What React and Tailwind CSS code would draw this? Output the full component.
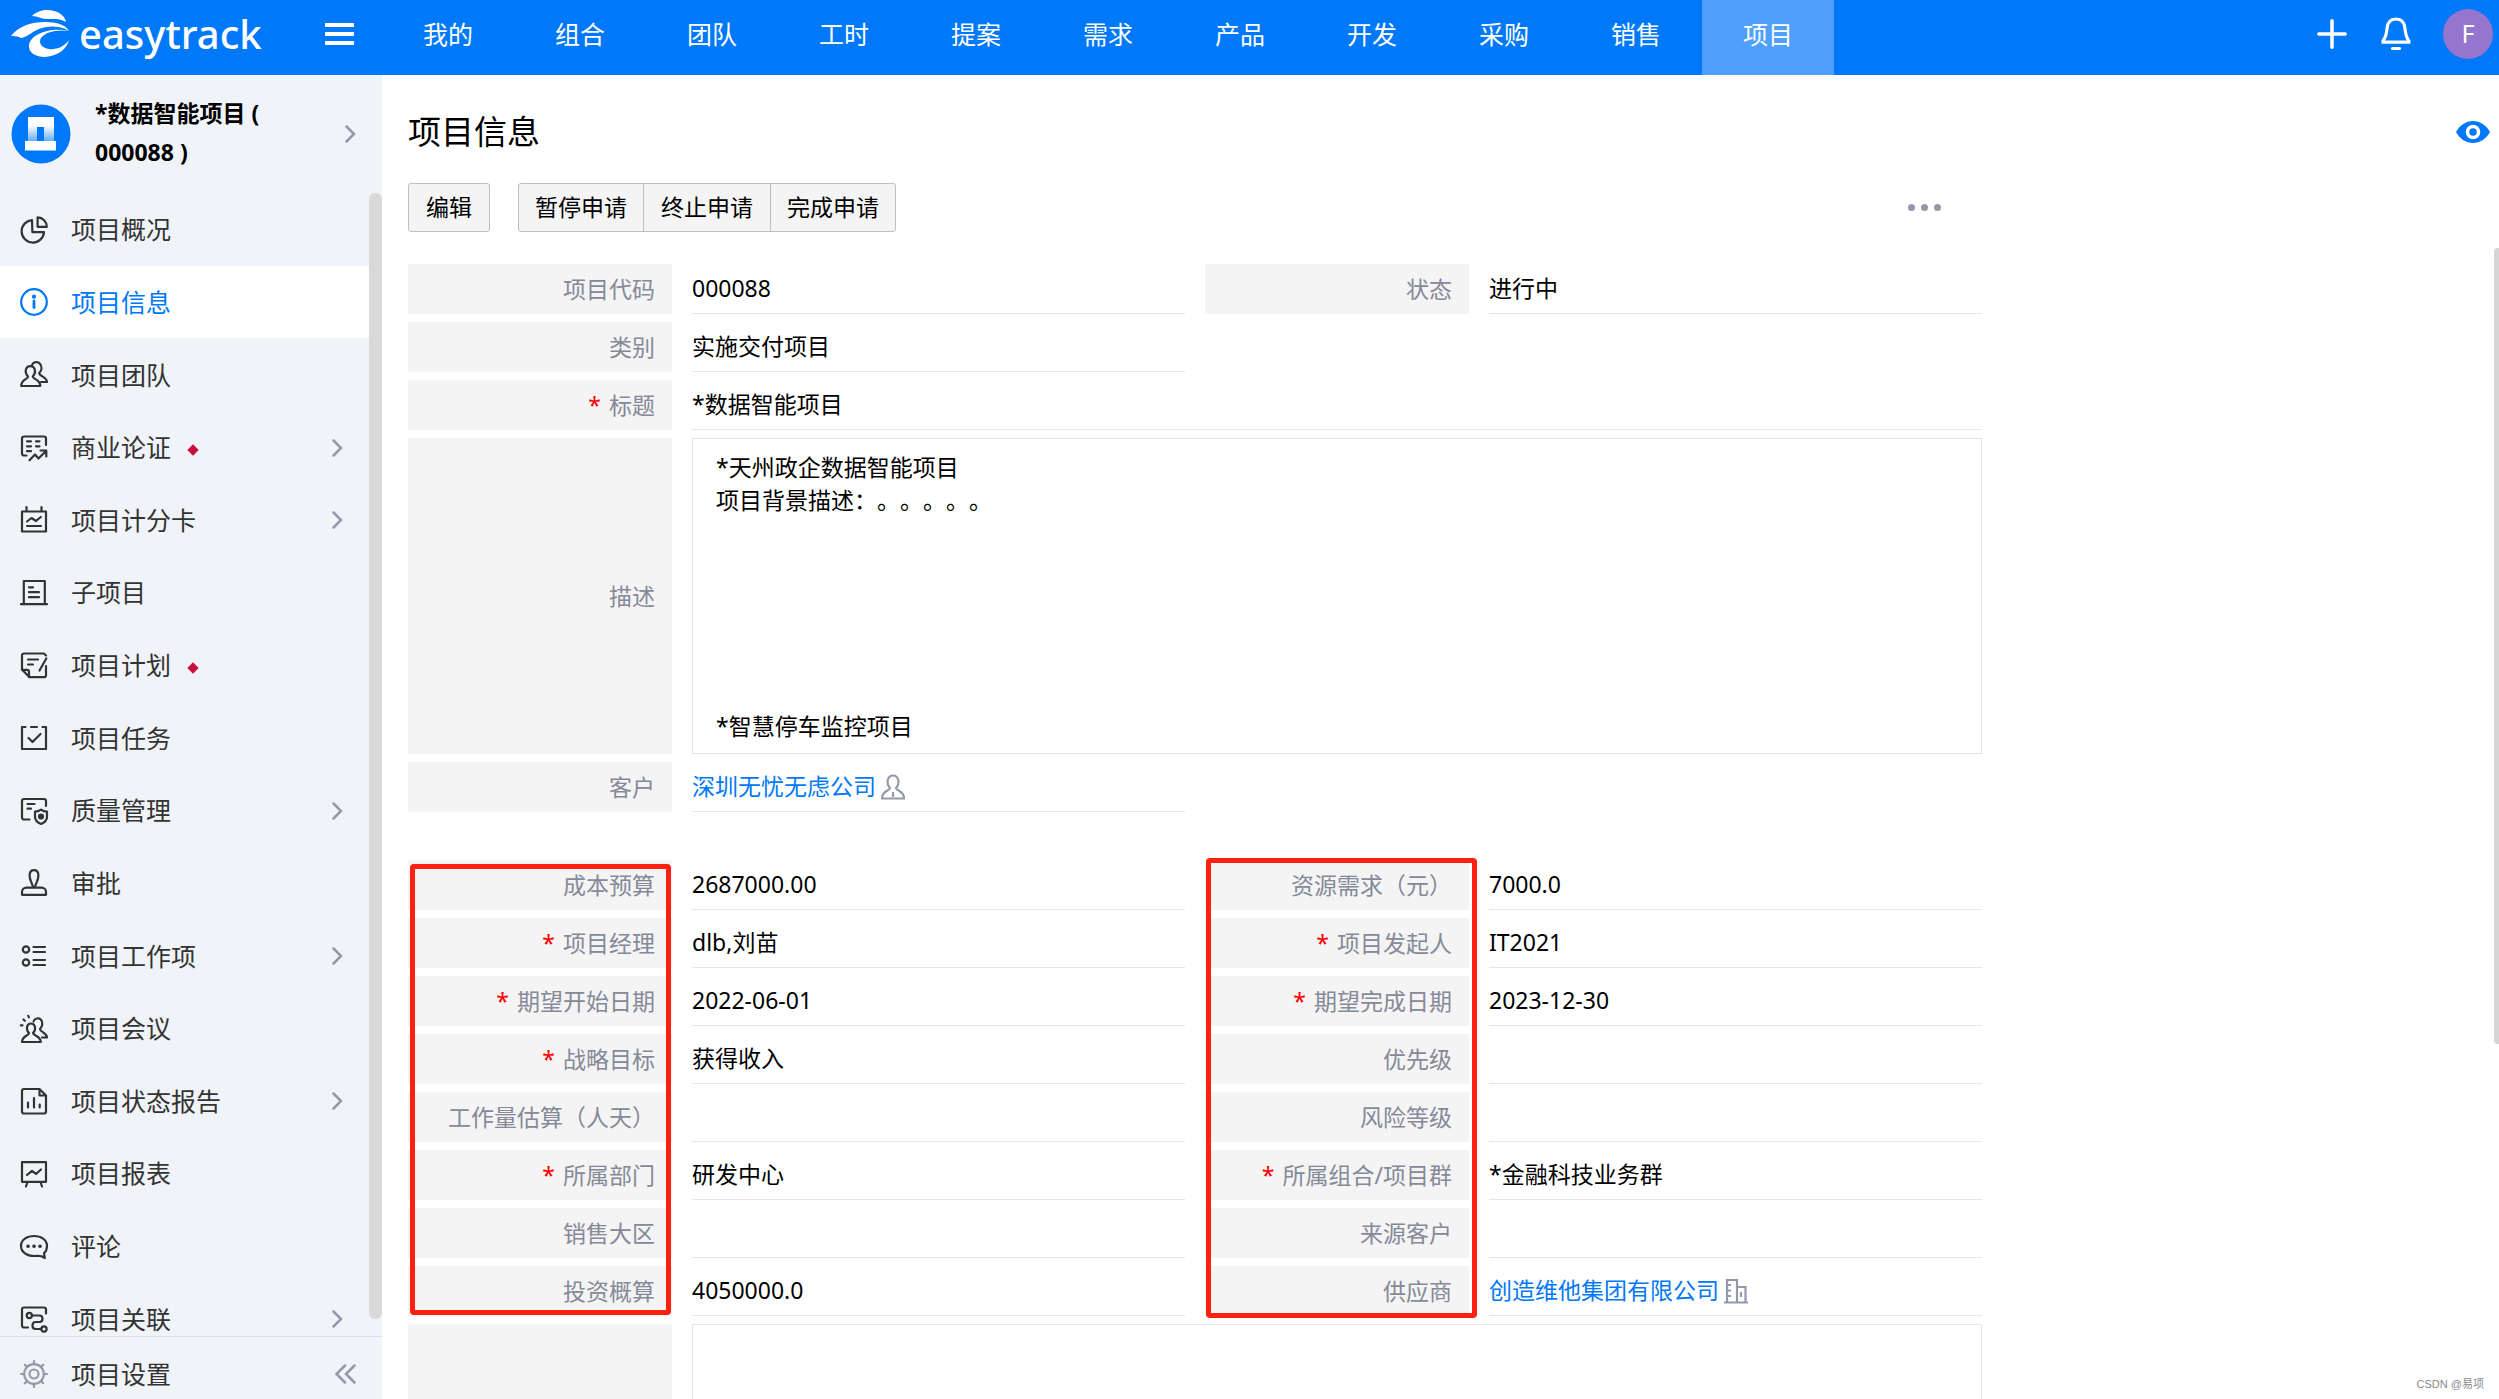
import { useState } from 'react'

const topNav = ['我的', '组合', '团队', '工时', '提案', '需求', '产品', '开发', '采购', '销售', '项目']

const icons = {
    overview: (
        <>
            <path d="M12 4.2A11.2 11.2 0 1 0 24 16.2H12.4Z" />
            <path d="M17.6 1.4V10.8H26.8A9.4 9.4 0 0 0 17.6 1.4Z" />
        </>
    ),
    info: (
        <>
            <circle cx="14" cy="14" r="12.8" />
            <circle cx="14" cy="8.7" r="1" fill="currentColor" />
            <path d="M14 13V19.5" strokeWidth="2.8" />
        </>
    ),
    team: (
        <>
            <path d="M8 15.5C4.4 12 5 5.2 10.3 5.2S16.4 12 12.8 15.5C12.8 18.5 20.3 18 20.3 25H1.2C1.2 18 8 18.5 8 15.5Z" />
            <path d="M12 4.6C12.5 1 17.5 0 19.8 2.5C22.3 5.5 22 9.5 19.2 12C19.2 15.5 26.6 15.5 27 21H21" />
        </>
    ),
    business: (
        <>
            <path d="M6.5 21.5H4A2 2 0 0 1 2 19.5V4.5A2 2 0 0 1 4 2.5H24A2 2 0 0 1 26 4.5V11" />
            <path d="M7 7.3H11M16 7.3H19.5M7 12.3H11M16 12.3H19.5M7 17.2H11M9.5 26.3L15 20.5L18.5 24.5L26 17M20.5 16.5H26.3V22.5" />
        </>
    ),
    scorecard: (
        <>
            <path d="M2 5.5H26V25.5H2ZM6.5 1V5M21.5 1V5" />
            <path d="M7 15.5L11.5 12L16 15L20.8 11M7 20H21" />
        </>
    ),
    subproject: (
        <>
            <path d="M3.8 25.2V2H24.8V25.2M1 25.2H27" />
            <path d="M9 8.3H13M9 13.2H19M9 18.2H19" />
        </>
    ),
    plan: (
        <>
            <path d="M26 14V23.2A2 2 0 0 1 24 25.2H9.5L2 17.5V3.5A2 2 0 0 1 4 1.5H24L26 3.5" />
            <path d="M2 17.8H7A2 2 0 0 1 9 19.8V25M8 7.5H18M8 12.5H13M26.3 6.5L19.5 18.5" />
        </>
    ),
    task: <path d="M5.5 3H2V25H26V3H22.5M11 3H17M8.5 14L12.5 18L20.5 10" />,
    quality: (
        <>
            <path d="M9.5 22.5H4A2 2 0 0 1 2 20.5V4A2 2 0 0 1 4 2H24A2 2 0 0 1 26 4V9M7.5 7H14.5M7.5 11.7H11" />
            <path d="M21 12.7C23 14.2 25 14.7 27 14.7V20C27 23.5 24.5 25.5 21 27C17.5 25.5 15 23.5 15 20V14.7C17 14.7 19 14.2 21 12.7Z" />
            <circle cx="21" cy="19.5" r="2" fill="currentColor" />
        </>
    ),
    approve: (
        <>
            <path d="M13 18C12 13.5 9.3 11 9.6 6C10 -0.5 18 -0.5 18.4 6C18.7 11 16 13.5 15 18" />
            <path d="M2 25.8V23C2 20.5 4 18.7 6.5 18.7H21.5C24 18.7 26 20.5 26 23V25.8Z" />
        </>
    ),
    workitem: (
        <>
            <circle cx="6" cy="7.5" r="3.2" />
            <circle cx="6" cy="20.5" r="3.2" />
            <path d="M13.5 5H25M13.5 10H25M13.5 18H25M13.5 23H25" />
        </>
    ),
    meeting: (
        <>
            <path d="M9 18C5.8 15 6.2 8.5 11 8.5S16.2 15 13 18C13 20.8 20.5 20.5 20.8 27H2C2.2 20.5 9 20.8 9 18Z" />
            <path d="M13.5 6.5C14.5 3.2 18.5 2.4 20.8 4.5C23.2 7.2 22.6 11.5 20 14C20 17 26.8 17.5 27 22.5H22" />
            <path d="M.8 10.3H2.5M3.5 4.5L4.8 5.8M8.3 .8L8.9 2.3" />
        </>
    ),
    report: (
        <>
            <path d="M19 2H4A2 2 0 0 0 2 4V24.5A2 2 0 0 0 4 26.5H24A2 2 0 0 0 26 24.5V8.5L19.5 2V8.5H26" />
            <path d="M8 15.5V20.5M14 11V20.5M19.7 17.5V20.5" />
        </>
    ),
    chart: <path d="M2 2.2H26V21.8H2ZM7.5 22L6 26.5M20.5 22L22 26.5M7 15L12 10.8L16 14L21 9.5" />,
    comment: (
        <>
            <path d="M24.8 25L24 20.3C26 18.5 27 16 27 13C27 6.8 21 3 14 3S1 6.8 1 13S7 23 14 23C17 23 19.5 22.6 21.5 23.2Z" />
            <path d="M8 13.3H8.1M14 13.3H14.1M20 13.3H20.1" strokeWidth="3.6" />
        </>
    ),
    relation: (
        <>
            <path d="M8 22.5H4A2 2 0 0 1 2 20.5V4.5A2 2 0 0 1 4 2.5H24A2 2 0 0 1 26 4.5V8.5" />
            <circle cx="9.3" cy="10.5" r="2.6" />
            <circle cx="24" cy="24" r="2.6" />
            <path d="M12 10.5H19.5C23.5 10.5 23.5 17 19.5 17H15.5C11.5 17 11.5 24 15.5 24H21" />
        </>
    ),
    settings: (
        <>
            <circle cx="14" cy="14" r="9.8" />
            <circle cx="14" cy="14" r="4.5" />
            <path d="M14 1V4M14 24V27M1 14H4M24 14H27M4.8 4.8L6.9 6.9M21.1 21.1L23.2 23.2M23.2 4.8L21.1 6.9M6.9 21.1L4.8 23.2" />
        </>
    ),
}

const sideNav = [
    { icon: 'overview', label: '项目概况' },
    { icon: 'info', label: '项目信息' },
    { icon: 'team', label: '项目团队' },
    { icon: 'business', label: '商业论证', mark: true, more: true },
    { icon: 'scorecard', label: '项目计分卡', more: true },
    { icon: 'subproject', label: '子项目' },
    { icon: 'plan', label: '项目计划', mark: true },
    { icon: 'task', label: '项目任务' },
    { icon: 'quality', label: '质量管理', more: true },
    { icon: 'approve', label: '审批' },
    { icon: 'workitem', label: '项目工作项', more: true },
    { icon: 'meeting', label: '项目会议' },
    { icon: 'report', label: '项目状态报告', more: true },
    { icon: 'chart', label: '项目报表' },
    { icon: 'comment', label: '评论' },
    { icon: 'relation', label: '项目关联', more: true },
]

const detailRows = [
    [{ label: '成本预算', value: '2687000.00' }, { label: '资源需求（元）', value: '7000.0' }],
    [{ label: '项目经理', value: 'dlb,刘苗', required: true }, { label: '项目发起人', value: 'IT2021', required: true }],
    [{ label: '期望开始日期', value: '2022-06-01', required: true }, { label: '期望完成日期', value: '2023-12-30', required: true }],
    [{ label: '战略目标', value: '获得收入', required: true }, { label: '优先级' }],
    [{ label: '工作量估算（人天）' }, { label: '风险等级' }],
    [{ label: '所属部门', value: '研发中心', required: true }, { label: '所属组合/项目群', value: '*金融科技业务群', required: true }],
    [{ label: '销售大区' }, { label: '来源客户' }],
    [{ label: '投资概算', value: '4050000.0' }, { label: '供应商', value: <CompanyLink name="创造维他集团有限公司" type="building" /> }],
]

function Icon({ name, className }) {
    return (
        <svg viewBox="0 0 28 28" className={'size-7 shrink-0 overflow-visible ' + className} fill="none" stroke="currentColor" strokeWidth="2.2" strokeLinecap="round" strokeLinejoin="round">
            {icons[name]}
        </svg>
    )
}

function Chevron() {
    return (
        <svg viewBox="0 0 11 18" className="h-[18px] w-[11px] shrink-0 text-[#9499aa]" fill="none" stroke="currentColor" strokeWidth="2.5" strokeLinecap="round">
            <path d="M1.5 1.5L9 9L1.5 16.5" />
        </svg>
    )
}

function CompanyLink({ name, type }) {
    return (
        <>
            <a href="#company" className="text-[#0078fa]">{name}</a>
            <svg viewBox="0 0 24 26" className="ml-[5px] h-[26px] w-6 text-[#9499aa]" fill="none" stroke="currentColor" strokeWidth="2.2">
                {type === 'building' ? (
                    <path d="M0 24.5H24M3 24V2H13V24M13 9H21.5V24M3 7H7M3 12.5H7M3 18H7M17 14V19" />
                ) : (
                    <path d="M9 14C5 10 6 1.5 12 1.5S19 10 15 14C15 17 23 16.5 23 24.5H1C1 16.5 9 17 9 14ZM12 18V23" />
                )}
            </svg>
        </>
    )
}

function FieldLabel({ children, required }) {
    return (
        <dt className="flex items-center justify-end bg-[#f4f4f4] pr-[17px] text-[#858998]">
            {required && <span className="mr-2 text-[#ff0000]">*</span>}
            {children}
        </dt>
    )
}

function FieldValue({ children, wide }) {
    return (
        <dd className={'flex h-[50px] items-center border-b border-[#e5e5ea] ' + (wide ? 'col-span-3' : '')}>
            {children}
        </dd>
    )
}

function Header() {
    const [active, setActive] = useState('项目')

    return (
        <header className="flex h-[75px] shrink-0 bg-[#0078fa] text-[25px] text-white">
            <div className="flex w-[382px] items-center justify-between pr-7 pb-2 pl-[11px]">
                <a href="#home" className="flex items-center gap-2">
                    <svg viewBox="0 0 60 48" className="h-12 w-[60px]" fill="currentColor">
                        <path d="M21 6C27 0 36-1 43 1C50 3 54 7 55 12C49 8 42 9 36 9C30 9 27 6 21 6Z" />
                        <path d="M0 26C8 16 20 12 34 12C46 12 55 15 58 21C48 15 36 16 28 19C20 22 17 27 10 28C6 26 3 26 0 26Z" />
                        <path d="M58 21C44 17 20 22 18 35C17 43 25 47 34 47C48 46 56 38 58 30C53 37 45 40 38 39C31 38 27 33 30 28C34 22 46 19 58 21Z" />
                    </svg>
                    <span className="text-[40px] leading-10 font-medium">easytrack</span>
                </a>
                <button aria-label="菜单" className="flex flex-col gap-[5px]">
                    <span className="h-1 w-[29px] bg-white" />
                    <span className="h-1 w-[29px] bg-white" />
                    <span className="h-1 w-[29px] bg-white" />
                </button>
            </div>
            <nav className="flex">
                {topNav.map(item => (
                    <button key={item} onClick={() => setActive(item)} className={'w-[132px] pb-1.5 ' + (active === item ? 'bg-[#4fa0fc]' : '')}>
                        {item}
                    </button>
                ))}
            </nav>
            <div className="ml-auto flex items-center pr-1.5 pb-2">
                <button aria-label="新建">
                    <svg viewBox="0 0 30 30" className="size-[30px]" stroke="currentColor" strokeWidth="3.5" strokeLinecap="round">
                        <path d="M15 1.8V28.2M1.8 15H28.2" />
                    </svg>
                </button>
                <button aria-label="通知" className="ml-[34px]">
                    <svg viewBox="0 0 30 34" className="h-[34px] w-[30px]" fill="none" stroke="currentColor" strokeWidth="3.2" strokeLinecap="round" strokeLinejoin="round">
                        <path d="M15 2C9 2 6.5 6 6 11.5C5.6 17.5 4.5 20.5 2 24V25.2H28V24C25.5 20.5 24.4 17.5 24 11.5C23.5 6 21 2 15 2Z" />
                        <path d="M11.5 31.5H18.5" />
                    </svg>
                </button>
                <button className="ml-8 size-[50px] rounded-full bg-[#9575cd] text-center">F</button>
            </div>
        </header>
    )
}

function Sidebar() {
    const [selected, setSelected] = useState('项目信息')

    return (
        <aside className="flex w-[382px] shrink-0 flex-col bg-[#f0f4f8] text-[25px] text-[#333]">
            <a href="#project" className="flex h-[118px] shrink-0 items-center pr-[26px] pl-[11px] text-black">
                <svg viewBox="0 0 60 60" className="size-[60px] shrink-0">
                    <defs>
                        <linearGradient id="arch" x1="0" y1="0" x2="0" y2="1">
                            <stop offset="0.35" stopColor="#fff" />
                            <stop offset="1" stopColor="#fff" stopOpacity="0.4" />
                        </linearGradient>
                    </defs>
                    <circle cx="30" cy="30" r="29.5" fill="#0078fa" />
                    <path d="M17 13H43V37H33V23H26V37H17Z" fill="url(#arch)" />
                    <path d="M14 37H45V46.5H14Z" fill="#fff" />
                </svg>
                <span className="ml-6 w-[200px] pb-0.5 text-[23px] leading-[39px] font-bold">*数据智能项目 ( 000088 )</span>
                <span className="ml-auto"><Chevron /></span>
            </a>
            <div className="flex min-h-0 flex-1 overflow-hidden">
                <ul className="flex h-[1162px] flex-1 flex-col">
                    {sideNav.map(item => (
                        <li key={item.label} className="flex-1">
                            <button
                                onClick={() => setSelected(item.label)}
                                className={'flex h-full w-full items-center pt-px pr-[26px] pl-5 ' + (selected === item.label ? 'bg-white text-[#0078fa]' : '')}>
                                <Icon name={item.icon} className="mr-[23px]" />
                                {item.label}
                                {item.mark && <span className="mt-1 ml-[18px] size-2 rotate-45 bg-[#c8103c]" />}
                                {item.more && <span className="ml-auto"><Chevron /></span>}
                            </button>
                        </li>
                    ))}
                </ul>
                <div className="mb-[17px] w-[13px] rounded-md bg-[#d9d9d9]" />
            </div>
            <div className="flex h-[63px] shrink-0 items-center border-t border-[#d9e2ec] pt-3 pr-[26px] pl-5">
                <Icon name="settings" className="mr-[23px] text-[#9499aa]" />
                <a href="#settings">项目设置</a>
                <button aria-label="收起" className="ml-auto text-[#9499aa]">
                    <svg viewBox="0 0 21 20" className="h-5 w-[21px]" fill="none" stroke="currentColor" strokeWidth="2.5" strokeLinecap="round">
                        <path d="M10 1.5L1.5 10L10 18.5M19.5 1.5L11 10L19.5 18.5" />
                    </svg>
                </button>
            </div>
        </aside>
    )
}

function Toolbar() {
    return (
        <div className="flex h-[49px] max-w-[1574px] items-stretch pr-[41px]">
            <button className="rounded-[3px] border border-[#bfbfbf] bg-[#f4f4f4] px-[17px]">编辑</button>
            <div className="ml-7 flex divide-x divide-[#bfbfbf] rounded-[3px] border border-[#bfbfbf] bg-[#f4f4f4]">
                <button className="px-4">暂停申请</button>
                <button className="px-[17px]">终止申请</button>
                <button className="px-4">完成申请</button>
            </div>
            <button aria-label="更多" className="ml-auto flex items-center gap-1.5">
                <span className="size-[7px] rounded-full bg-[#9499aa]" />
                <span className="size-[7px] rounded-full bg-[#9499aa]" />
                <span className="size-[7px] rounded-full bg-[#9499aa]" />
            </button>
        </div>
    )
}

export default function App() {
    return (
        <div className="relative flex h-screen flex-col overflow-hidden bg-white font-['Noto_Sans','Noto_Sans_CJK_SC',sans-serif] text-[23px] leading-[33px] text-black">
            <Header />
            <div className="flex min-h-0 flex-1">
                <Sidebar />
                <main className="min-w-0 flex-1 overflow-hidden pl-[26px]">
                    <div className="flex h-[108px] items-center justify-between pt-1.5 pr-[9px]">
                        <h1 className="text-[33px] leading-10">项目信息</h1>
                        <button aria-label="关注">
                            <svg viewBox="0 0 34 22" className="h-[22px] w-[34px]">
                                <path d="M0 11C4 4 10 0 17 0S30 4 34 11C30 18 24 22 17 22S4 18 0 11Z" fill="#0078fa" />
                                <circle cx="17" cy="11" r="5.5" fill="#0078fa" stroke="#fff" strokeWidth="3.5" />
                            </svg>
                        </button>
                    </div>
                    <Toolbar />

                    <dl className="mt-8 grid max-w-[1574px] grid-cols-[264px_1fr_264px_1fr] gap-x-5 gap-y-2">
                        <FieldLabel>项目代码</FieldLabel>
                        <FieldValue>000088</FieldValue>
                        <FieldLabel>状态</FieldLabel>
                        <FieldValue>进行中</FieldValue>

                        <FieldLabel>类别</FieldLabel>
                        <FieldValue>实施交付项目</FieldValue>

                        <div className="col-span-2" />
                        <FieldLabel required>标题</FieldLabel>
                        <FieldValue wide>*数据智能项目</FieldValue>

                        <FieldLabel>描述</FieldLabel>
                        <dd className="col-span-3 flex h-[316px] flex-col justify-between border border-[#e5e5ea] px-[23px] pt-3 pb-2.5 [text-spacing-trim:space-all]">
                            <p>*天州政企数据智能项目<br />项目背景描述：。。。。。</p>
                            <p>*智慧停车监控项目</p>
                        </dd>

                        <FieldLabel>客户</FieldLabel>
                        <FieldValue><CompanyLink name="深圳无忧无虑公司" type="person" /></FieldValue>
                    </dl>

                    <div className="relative mt-12 max-w-[1574px]">
                        <dl className="grid grid-cols-[264px_1fr_264px_1fr] gap-x-5 gap-y-2">
                            {detailRows.flat().map(field => (
                                <div key={field.label} className="contents">
                                    <FieldLabel required={field.required}>{field.label}</FieldLabel>
                                    <FieldValue>{field.value}</FieldValue>
                                </div>
                            ))}
                        </dl>
                        {/* highlight frames over the two label columns */}
                        <div className="absolute top-1 bottom-px left-0.5 w-[261px] rounded border-[5px] border-[#ff2010]" />
                        <div className="absolute -top-0.5 -bottom-0.5 left-[798px] w-[271px] rounded border-[5px] border-[#ff2010]" />
                    </div>

                    <dl className="mt-2 grid max-w-[1574px] grid-cols-[264px_1fr] gap-x-5">
                        <dt className="h-[316px] bg-[#f4f4f4]" />
                        <dd className="border border-[#e5e5ea]" />
                    </dl>
                </main>
            </div>
            <div className="absolute top-[248px] right-0 h-[796px] w-[5px] rounded-l bg-[#d4d4d4]" />
            <div className="absolute right-[15px] bottom-[7px] font-['Liberation_Sans','Noto_Sans_CJK_SC',sans-serif] text-[11px] leading-4 text-[#888]">CSDN @易项</div>
        </div>
    )
}
